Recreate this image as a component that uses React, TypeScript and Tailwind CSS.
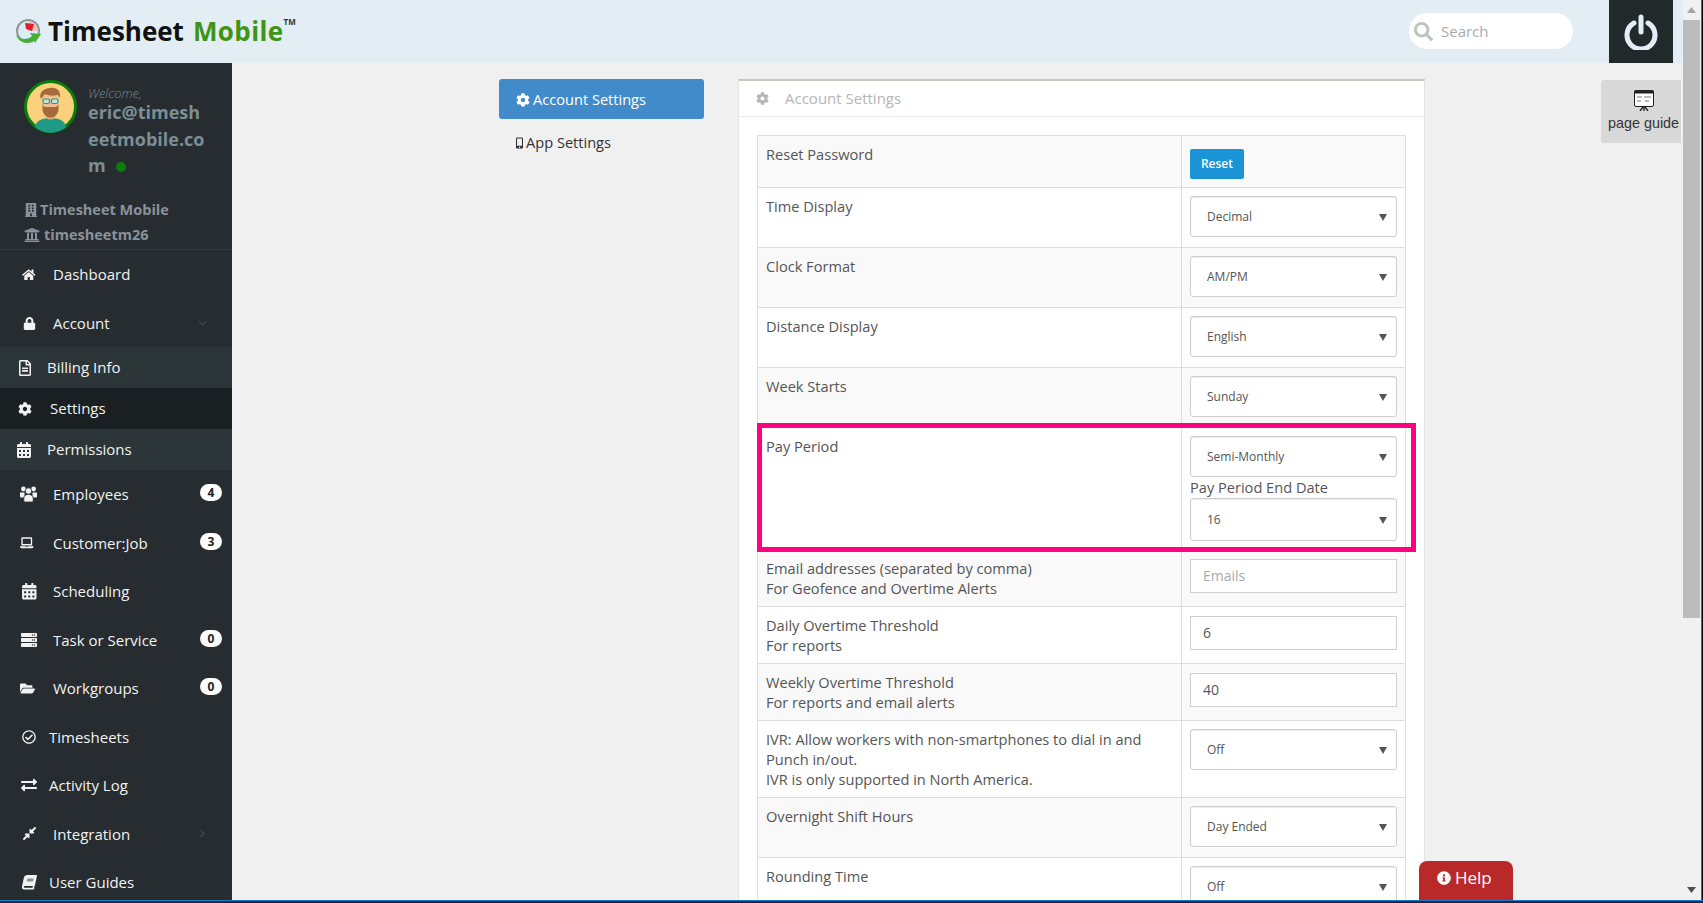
import type { ReactNode } from "react";
import {
  FaBook,
  FaBuilding,
  FaCalendarAlt,
  FaChevronDown,
  FaChevronRight,
  FaCog,
  FaCompressAlt,
  FaExchangeAlt,
  FaFolderOpen,
  FaHome,
  FaInfoCircle,
  FaLaptop,
  FaLock,
  FaMobileAlt,
  FaRegCheckCircle,
  FaRegFileAlt,
  FaSearch,
  FaServer,
  FaUniversity,
} from "react-icons/fa";

const SANS = "font-['Open_Sans','Liberation_Sans',sans-serif]";

interface NavItem {
  label: string;
  icon: ReactNode;
  pad: string;
  iconBox: string;
  badge?: number;
  row?: string;
  caret?: ReactNode;
}

function UsersIcon() {
  return (
    <svg width="17" height="16" viewBox="0 0 17 16" fill="currentColor">
      <circle cx="3.4" cy="3" r="2.4" />
      <circle cx="13.6" cy="3" r="2.4" />
      <path d="M0 6.5h4.5v5H1a1 1 0 0 1-1-1zM12.5 6.5H17v4a1 1 0 0 1-1 1h-3.5z" />
      <circle cx="8.5" cy="5" r="3.2" stroke="#262c2f" strokeWidth="0.8" />
      <path d="M3.8 15v-2.6c0-2.6 2-4 4.7-4s4.7 1.4 4.7 4V15a1 1 0 0 1-1 1H4.800a1 1 0 0 1-1-1z" stroke="#262c2f" strokeWidth="0.8" />
    </svg>
  );
}

const NAV_ITEMS: NavItem[] = [
  { label: "Dashboard", icon: <FaHome className="text-[13.5px]" />, pad: "pl-[22px]", iconBox: "w-[31px]", row: "h-[49px]" },
  {
    label: "Account",
    icon: <FaLock className="text-[13px] ml-[1px]" />,
    pad: "pl-[22px]",
    iconBox: "w-[31px]",
    row: "h-[48px]",
    caret: <FaChevronDown className="text-[9px] text-[#3e494d]" />,
  },
  { label: "Billing Info", icon: <FaRegFileAlt className="text-[16px] ml-[1px]" />, pad: "pl-[16px]", iconBox: "w-[31px]", row: "h-[41px] bg-[#2c3538]" },
  { label: "Settings", icon: <FaCog className="text-[14px]" />, pad: "pl-[18px]", iconBox: "w-[32px]", row: "h-[41px] bg-[#1a1f21]" },
  { label: "Permissions", icon: <FaCalendarAlt className="text-[16px]" />, pad: "pl-[16px]", iconBox: "w-[31px]", row: "h-[41px] bg-[#2c3538]" },
  { label: "Employees", icon: <UsersIcon />, pad: "pl-[20px]", iconBox: "w-[33px]", badge: 4 },
  { label: "Customer:Job", icon: <FaLaptop className="text-[13.5px]" />, pad: "pl-[20px]", iconBox: "w-[33px]", badge: 3 },
  { label: "Scheduling", icon: <FaCalendarAlt className="text-[16.500px]" />, pad: "pl-[21px]", iconBox: "w-[32px]" },
  { label: "Task or Service", icon: <FaServer className="text-[16px]" />, pad: "pl-[21px]", iconBox: "w-[32px]", badge: 0 },
  { label: "Workgroups", icon: <FaFolderOpen className="text-[15px]" />, pad: "pl-[20px]", iconBox: "w-[33px]", badge: 0 },
  { label: "Timesheets", icon: <FaRegCheckCircle className="text-[14px]" />, pad: "pl-[22px]", iconBox: "w-[27px]" },
  { label: "Activity Log", icon: <FaExchangeAlt className="text-[16px]" />, pad: "pl-[21px]", iconBox: "w-[28px]" },
  {
    label: "Integration",
    icon: <FaCompressAlt className="text-[15px]" />,
    pad: "pl-[22px]",
    iconBox: "w-[31px]",
    caret: <FaChevronRight className="text-[9px] text-[#3e494d]" />,
  },
  { label: "User Guides", icon: <FaBook className="text-[14.500px] -skew-x-12" />, pad: "pl-[22px]", iconBox: "w-[27px]" },
];

function Logo() {
  return (
    <svg width="28" height="28" viewBox="0 0 28 28" className="mr-[6px] shrink-0">
      <circle cx="14" cy="13" r="12" fill="#8f9699" />
      <circle cx="14" cy="13" r="10" fill="#d9ecf7" />
      <path d="M14 3a10 10 0 0 1 10 10H14z" fill="#eec3c3" />
      <path d="M11 5l9 1-2 7-6-2z" fill="#d8232a" />
      <path d="M2 17c4 5 12 5 16 1l-2-3 11 1-6 9-1-3c-6 5-15 3-18-5z" fill="#46b034" />
    </svg>
  );
}

function Avatar() {
  return (
    <svg width="53" height="53" viewBox="0 0 53 53" className="shrink-0">
      <circle cx="26.500" cy="26.500" r="25" fill="#fbd27b" stroke="#0b7d0b" strokeWidth="3" />
      <path d="M11 47c1-7 8-9 15.500-9S41 40 42 47a24 24 0 0 1-31 0z" fill="#1f9a84" />
      <path d="M22 30h9v8c-3 2-6 2-9 0z" fill="#e7ad7d" />
      <path d="M18.500 16h16v12c0 6-4 9-8 9s-8-3-8-9z" fill="#f2bd92" />
      <path d="M18.500 24c1 3 2 3 4 3h8c2 0 3 0 4-3v6c-1 5-4 7.500-8 7.500s-7-2.500-8-7.500z" fill="#a76a3b" />
      <path d="M17 19c-3-6 3-11 9-11 7-1 11 3 10 10l-2-3c-5 1-10 1-13-1z" fill="#a76a3b" />
      <rect x="19" y="19" width="6.500" height="4.500" rx="1.500" fill="#bfe6de" stroke="#16a08c" strokeWidth="1.200" />
      <rect x="27.500" y="19" width="6.500" height="4.500" rx="1.500" fill="#bfe6de" stroke="#16a08c" strokeWidth="1.200" />
    </svg>
  );
}

function Sidebar() {
  return (
    <aside className={`w-[232px] shrink-0 bg-[#262c2f] text-white overflow-hidden ${SANS}`}>
      <div className="h-[187px] border-b border-[#343b3e] relative">
        <div className="flex pl-[24px] pt-[17px] gap-[11px]">
          <Avatar />
          <div className="w-[122px]">
            <div className="text-[13px] leading-[12px] italic font-light text-[#7d878b] mt-[7px]">Welcome,</div>
            <div className="text-[18px] leading-[26.500px] font-bold text-[#7c8e95] break-all">
              eric@timesheetmobile.com
              <span className="inline-block w-[10px] h-[10px] rounded-full bg-[#0b7d0b] ml-[10px]" />
            </div>
          </div>
        </div>
        <div className="absolute left-[24px] top-[134px] text-[14.500px] leading-[25px] font-bold text-[#8a929c]">
          <div className="flex items-center gap-[2px]">
            <FaBuilding className="text-[14px]" />
            Timesheet Mobile
          </div>
          <div className="flex items-center gap-[4px]">
            <FaUniversity className="text-[16px]" />
            timesheetm26
          </div>
        </div>
      </div>
      <nav>
        {NAV_ITEMS.map((item) => (
          <div
            key={item.label}
            className={`flex items-center text-[15px] text-[#f2f2f2] ${item.pad} ${item.row ?? "h-[48.5px]"}`}
          >
            <span className={`flex items-center shrink-0 ${item.iconBox}`}>{item.icon}</span>
            <span>{item.label}</span>
            {item.badge !== undefined && (
              <span className="ml-auto mr-[10px] -mt-[3px] w-[22px] h-[17px] rounded-full bg-white text-[#222] text-[12px] leading-[17px] font-bold text-center">
                {item.badge}
              </span>
            )}
            {item.caret && <span className="ml-auto mr-[25px]">{item.caret}</span>}
          </div>
        ))}
      </nav>
    </aside>
  );
}

function Arrow() {
  return (
    <svg width="8" height="8" viewBox="0 0 8 8" className="shrink-0">
      <path d="M0 1h8L4 8z" fill="#555" />
    </svg>
  );
}

function Select({ value, tall }: { value: string; tall?: boolean }) {
  return (
    <div
      className={`${
        tall ? "h-[43px]" : "h-[41px]"
      } flex items-center justify-between pl-[16px] pr-[9px] bg-white border border-[#cfcfcf] rounded-[3px] shadow-[inset_0_1px_1px_rgba(0,0,0,0.08)] text-[12px] text-[#555]`}
    >
      <span>{value}</span>
      <Arrow />
    </div>
  );
}

function TextBox({ value, placeholder }: { value?: string; placeholder?: string }) {
  return (
    <div
      className={`h-[34px] flex items-center pl-[12px] bg-white border border-[#cfcfcf] text-[14px] ${
        value ? "text-[#555]" : "text-[#aaa]"
      }`}
    >
      {value ?? placeholder}
    </div>
  );
}

interface Row {
  label: string[];
  control: ReactNode;
  cell?: string;
}

const ROWS: Row[] = [
  {
    label: ["Reset Password"],
    control: (
      <button className="block w-[54px] h-[30px] rounded-[2px] bg-[#1a94d6] text-white text-[12px] font-semibold">
        Reset
      </button>
    ),
    cell: "pt-[13px] pb-[8px]",
  },
  { label: ["Time Display"], control: <Select value="Decimal" /> },
  { label: ["Clock Format"], control: <Select value="AM/PM" /> },
  { label: ["Distance Display"], control: <Select value="English" /> },
  { label: ["Week Starts"], control: <Select value="Sunday" /> },
  {
    label: ["Pay Period"],
    control: (
      <>
        <Select value="Semi-Monthly" />
        <div className="text-[14.6px] leading-[21px] text-[#555] whitespace-nowrap">Pay Period End Date</div>
        <Select value="16" tall />
      </>
    ),
    cell: "pt-[8px] pb-[8px]",
  },
  {
    label: ["Email addresses (separated by comma)", "For Geofence and Overtime Alerts"],
    control: <TextBox placeholder="Emails" />,
    cell: "pt-[9px] pb-[7px]",
  },
  { label: ["Daily Overtime Threshold", "For reports"], control: <TextBox value="6" />, cell: "pt-[9px] pb-[7px]" },
  {
    label: ["Weekly Overtime Threshold", "For reports and email alerts"],
    control: <TextBox value="40" />,
    cell: "pt-[9px] pb-[7px]",
  },
  {
    label: ["IVR: Allow workers with non-smartphones to dial in and Punch in/out.", "IVR is only supported in North America."],
    control: <Select value="Off" />,
  },
  { label: ["Overnight Shift Hours"], control: <Select value="Day Ended" /> },
  { label: ["Rounding Time"], control: <Select value="Off" /> },
];

function SettingsTable() {
  return (
    <table className="w-[649px] table-fixed border-collapse text-[14.6px] leading-[20px] text-[#555]">
      <colgroup>
        <col className="w-[424px]" />
        <col />
      </colgroup>
      <tbody>
        {ROWS.map((row, i) => (
          <tr key={row.label[0]} className={i % 2 === 0 ? "bg-[#f9f9f9]" : "bg-white"}>
            <td className="border border-[#ddd] px-[8px] py-[8px] align-top">
              {row.label.map((line) => (
                <div key={line}>{line}</div>
              ))}
            </td>
            <td className={`border border-[#ddd] px-[8px] align-top ${row.cell ?? "pt-[8px] pb-[10px]"}`}>{row.control}</td>
          </tr>
        ))}
      </tbody>
    </table>
  );
}

function PageGuide() {
  return (
    <div className="w-[80px] h-[63px] mt-[1px] ml-auto mr-[2px] pl-[5px] shrink-0 rounded-l-[3px] bg-[#d8d8d8] flex flex-col items-center pt-[10px] font-['Liberation_Sans',sans-serif] text-[14.4px] text-[#333]">
      <svg width="20" height="21" viewBox="0 0 20 21">
        <rect x="0.5" y="0.5" width="19" height="16" rx="1.5" fill="#fff" stroke="#222" />
        <rect x="0.5" y="0.5" width="19" height="3" fill="#222" />
        <path d="M3 6h5v2H3zM10 6h7v2h-7zM3 10h4v2H3zM11 10h4v2h-4z" fill="#bbb" />
        <path d="M9 17l-3 4M11 17l3 4M10 17v4" stroke="#222" strokeWidth="1.3" />
      </svg>
      <span className="mt-[2px] leading-[20px] whitespace-nowrap">page guide</span>
    </div>
  );
}

function Scrollbar() {
  return (
    <div className="w-[17px] shrink-0 bg-[#f1f1f1] flex flex-col">
      <div className="h-[20px] flex items-center justify-center">
        <svg width="9" height="6" viewBox="0 0 9 6">
          <path d="M4.5 0L9 6H0z" fill="#a3a3a3" />
        </svg>
      </div>
      <div className="h-[598px] bg-[#bcbcbc]" />
      <div className="mt-auto h-[20px] flex items-center justify-center">
        <svg width="9" height="6" viewBox="0 0 9 6">
          <path d="M0 0h9L4.5 6z" fill="#505050" />
        </svg>
      </div>
    </div>
  );
}

export default function App() {
  return (
    <div className={`w-full h-screen overflow-hidden flex flex-col bg-[#0b2b4a] ${SANS}`}>
      <div className="flex-1 min-h-0 flex">
        <div className="flex-1 min-w-0 flex flex-col relative">
          <header className="h-[63px] shrink-0 bg-[#e2edf4] flex items-center pl-[14px] pr-[10px]">
            <Logo />
            <div className="flex items-start text-[26px] leading-none font-bold text-[#111] whitespace-nowrap -mt-[2px]">
              <span>Timesheet</span>
              <span className="ml-[9px] text-[#3f9413] tracking-[0.4px]">Mobile</span>
              <span className="text-[8px] font-bold text-[#333]">TM</span>
            </div>
            <div className="ml-auto -mt-[1px] w-[164px] h-[36px] rounded-full bg-white flex items-center pl-[5px] text-[15px] text-[#aaa]">
              <FaSearch className="text-[19px] text-[#bcc4bc] mr-[8px]" />
              Search
            </div>
            <div className="ml-[36px] w-[64px] h-[63px] bg-[#22292b] flex items-center justify-center">
              <svg width="34" height="36" viewBox="0 0 34 36" fill="none" stroke="#e2edf4" strokeWidth="5" strokeLinecap="round">
                <path d="M10 9a14 14 0 1 0 14 0" />
                <path d="M17 3v15" />
              </svg>
            </div>
          </header>

          <div className="flex-1 min-h-0 flex">
            <Sidebar />
            <main className="flex-1 min-w-0 bg-[#f0f0f0] flex items-start pt-[16px] pl-[267px] overflow-hidden">
              <div className="w-[205px] shrink-0 text-[14.6px]">
                <div className="h-[40px] pt-[2px] rounded-[3px] bg-[#428bca] text-white flex items-center gap-[3px] pl-[17px]">
                  <FaCog className="text-[14px]" />
                  Account Settings
                </div>
                <div className="h-[40px] pt-[2px] mt-[3px] text-[#333] flex items-center gap-[3px] pl-[17px]">
                  <FaMobileAlt className="w-[7px] h-[12px]" />
                  App Settings
                </div>
              </div>
              <section className="w-[687px] shrink-0 ml-[34px] bg-white border-t-2 border-x border-t-[#c9c6bf] border-x-[#e4e4e4]">
                <div className="h-[36px] flex items-center pl-[17px] gap-[16px] border-b border-[#e8e8e8] text-[15px] text-[#b5b5b5]">
                  <FaCog className="text-[13px]" />
                  Account Settings
                </div>
                <div className="pl-[18px] pt-[18px]">
                  <SettingsTable />
                </div>
              </section>
              <PageGuide />
            </main>
          </div>

          <div className="absolute left-[757px] top-[423px] w-[659px] h-[129px] border-[5px] border-[#ff0080] pointer-events-none" />
          <div className="absolute left-[1419px] bottom-0 w-[94px] h-[39px] pb-[6px] rounded-t-[8px] bg-[#b92929] text-white text-[17px] flex items-center gap-[4px] pl-[18px]">
            <FaInfoCircle className="text-[14px]" />
            Help
          </div>
        </div>
        <Scrollbar />
        <div className="w-[3px] shrink-0 bg-[#1b78c8] border-x border-l-[#f1f1f1] border-r-[#050505]" />
      </div>
      <div className="h-[3px] shrink-0 bg-[#0b2b4a] border-t border-[#1b78c8]" />
    </div>
  );
}
